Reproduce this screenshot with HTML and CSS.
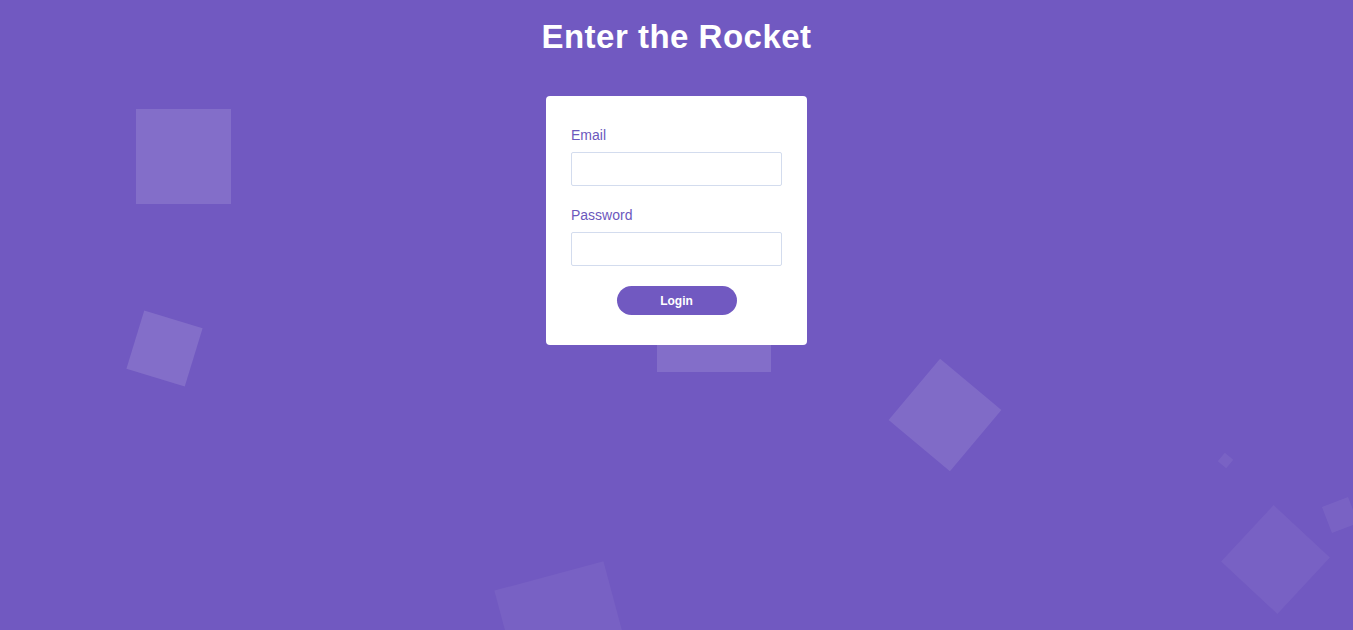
FILE: index.html
```html
<!DOCTYPE html>
<html lang="en">
<head>
<meta charset="utf-8">
<title>Enter the Rocket</title>
<link rel="stylesheet" href="styles.css">
</head>
<body>
<div class="bg">
  <span class="sq sq1"></span>
  <span class="sq sq2"></span>
  <span class="sq sq3"></span>
  <span class="sq sq4"></span>
  <span class="sq sq5"></span>
  <span class="sq sq6"></span>
  <span class="sq sq7"></span>
  <span class="sq sq8"></span>
</div>
<main class="page">
  <h1 class="title">Enter the Rocket</h1>
  <form class="card">
    <div class="field">
      <label class="label" for="email">Email</label>
      <input class="input" id="email" type="email">
    </div>
    <div class="field">
      <label class="label" for="password">Password</label>
      <input class="input" id="password" type="password">
    </div>
    <button class="btn" type="button">Login</button>
  </form>
</main>
</body>
</html>
```
FILE: styles.css
```css
* { box-sizing: border-box; }
html, body {
  margin: 0;
  height: 100%;
}
body {
  background: #7159c1;
  font-family: "Liberation Sans", Arial, sans-serif;
  overflow: hidden;
  position: relative;
}
.bg {
  position: absolute;
  inset: 0;
  overflow: hidden;
}
.sq {
  position: absolute;
  display: block;
  background: rgba(255, 255, 255, 0.13);
}
.sq1 { left: 136px; top: 109px; width: 95px; height: 95px; }
.sq2 { left: 134px; top: 318px; width: 61px; height: 61px; transform: rotate(17deg); }
.sq3 { left: 657px; top: 258px; width: 114px; height: 114px; }
.sq4 { left: 905px; top: 375px; width: 80px; height: 80px; transform: rotate(40deg); background: rgba(255,255,255,0.11); }
.sq5 { left: 1220px; top: 455px; width: 11px; height: 11px; transform: rotate(40deg); background: rgba(255,255,255,0.06); }
.sq6 { left: 1326px; top: 501px; width: 28px; height: 28px; transform: rotate(-21deg); background: rgba(255,255,255,0.06); }
.sq7 { left: 1237px; top: 521px; width: 77px; height: 77px; transform: rotate(43deg); background: rgba(255,255,255,0.05); }
.sq8 { left: 507px; top: 574px; width: 113px; height: 113px; transform: rotate(-15deg); background: rgba(255,255,255,0.05); }

.page {
  position: relative;
  display: flex;
  flex-direction: column;
  align-items: center;
  padding-top: 18px;
}
.title {
  margin: 0;
  color: #fff;
  font-size: 33px;
  line-height: 37px;
  font-weight: bold;
  letter-spacing: 0.5px;
}
.card {
  margin-top: 41px;
  width: 261px;
  background: #fff;
  border-radius: 4px;
  padding: 30px 25px;
  display: flex;
  flex-direction: column;
}
.field {
  display: flex;
  flex-direction: column;
  margin-bottom: 20px;
}
.label {
  color: #6c58bd;
  font-size: 14px;
  line-height: 18px;
  margin-bottom: 8px;
}
.input {
  width: 100%;
  height: 34px;
  border: 1px solid #d3dcee;
  border-radius: 2px;
  background: #fff;
  font: inherit;
  padding: 0 8px;
}
.btn {
  align-self: center;
  width: 120px;
  height: 29px;
  border: 0;
  border-radius: 15px;
  background: #7159c1;
  color: #fff;
  font-family: "Liberation Sans", Arial, sans-serif;
  font-weight: bold;
  font-size: 12px;
  padding: 0;
}
```
